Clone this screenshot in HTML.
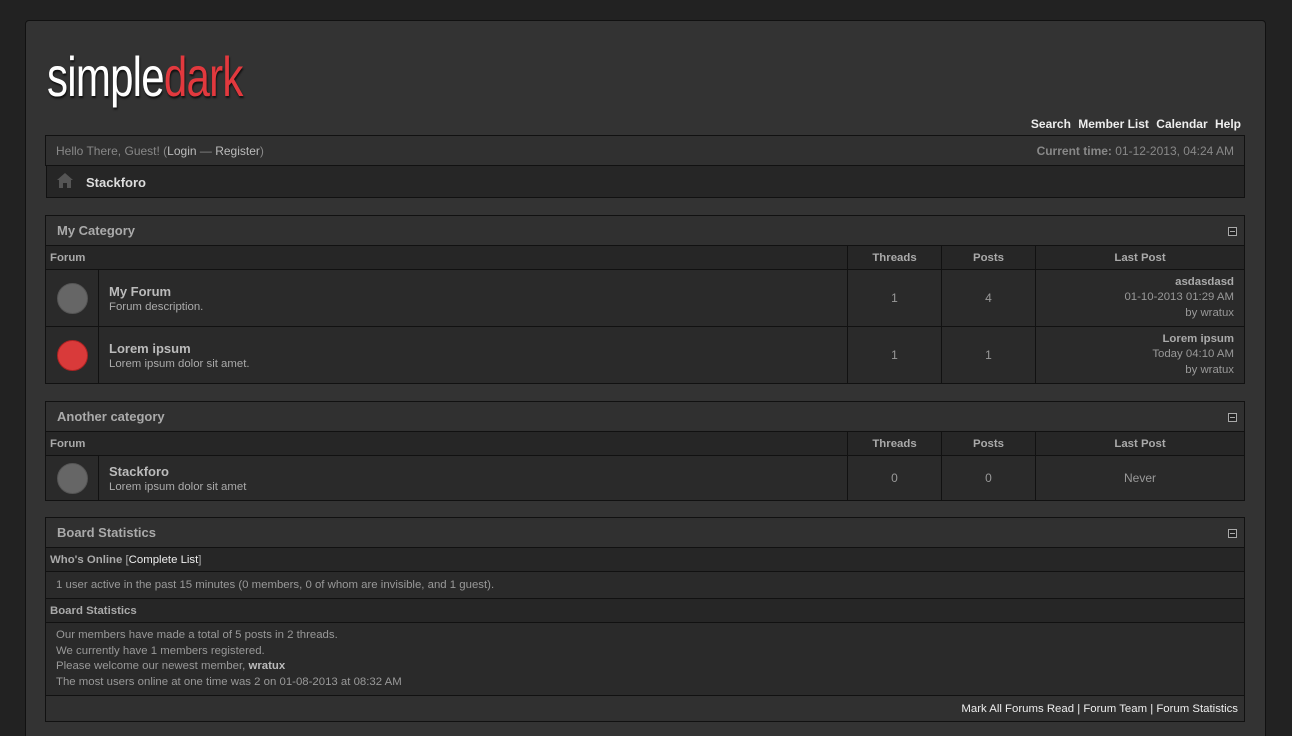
<!DOCTYPE html>
<html><head><meta charset="utf-8"><style>
*{box-sizing:border-box;margin:0;padding:0}
html,body{width:1292px;height:736px;overflow:hidden}
body{background:#222;font-family:"Liberation Sans","DejaVu Sans",sans-serif;font-size:11.4px;color:#aaa;position:relative}
.wrap{position:absolute;left:25px;top:20px;width:1241px;height:730px;background:#333;border:1px solid #111;border-radius:4px}
.a{position:absolute}
.logo{left:47px;top:44px;font-size:56px;color:#fff;letter-spacing:-1px;text-shadow:1px 2px 2px #111;transform:scaleX(0.75);transform-origin:0 0;white-space:nowrap}
.logo span{color:#e2393e}
.links{right:51px;top:117px;font-weight:bold;font-size:12px;color:#eee}
.links b{margin-left:4px}
.bar{left:45px;width:1200px;border:1px solid #111}
table{border-collapse:collapse;width:1200px;position:absolute;left:45px;table-layout:fixed}
td{border:1px solid #111;background:#2a2a2a}
.th td{background:#303030;height:30px;font-size:13px;font-weight:bold;color:#aaa;padding-left:11px;position:relative}
.ch td{background:#262626;height:24px;font-weight:bold;color:#aaa;text-align:center}
.ch td:first-child{text-align:left;padding-left:4px}
.c{text-align:center;font-size:12px;color:#999}
.ic{text-align:center}
.dot{display:inline-block;width:31px;height:31px;border-radius:50%;background:#666;border:1px solid #555;vertical-align:middle}
.red{background:#d93a3a;border-color:#a22}
.fn{padding-left:10px}
.fn b{font-size:13px;color:#bbb;display:block;margin-bottom:2px}
.lp{text-align:right;padding-right:10px;line-height:15.5px;color:#999}
.lp b{color:#aaa}
.col{position:absolute;right:7px;top:11px;width:9px;height:9px;border:1px solid #aaa;background:#222}
.col:after{content:"";position:absolute;left:1px;top:3px;width:5px;height:1px;background:#aaa}
.sub td{background:#262626;height:24px;font-weight:bold;color:#aaa;padding-left:4px}
.txt td{padding-left:10px;color:#999}
</style></head><body>
<div class="wrap"></div>
<div class="a logo">simple<span>dark</span></div>
<div class="a links">Search <b>Member List</b> <b>Calendar</b> <b>Help</b></div>
<div class="a bar" style="top:135px;height:31px;background:#303030;padding:8px 10px;font-size:12px;color:#888">Hello There, Guest! (<span style="color:#bbb">Login</span> — <span style="color:#bbb">Register</span>)<span style="float:right"><b>Current time:</b> 01-12-2013, 04:24 AM</span></div>
<div class="a bar" style="top:166px;height:32px;background:#262626;border-top:none;left:46px;width:1199px">
<svg class="a" style="left:9px;top:6px" width="18" height="17" viewBox="0 0 18 17"><path d="M9 1L1 8h2v8h4v-5h4v5h4V8h2z" fill="#555"/></svg>
<b class="a" style="left:39px;top:9px;font-size:13px;color:#ddd">Stackforo</b></div>

<table style="top:215px">
<colgroup><col style="width:53px"><col style="width:749px"><col style="width:94px"><col style="width:94px"><col></colgroup>
<tr class="th"><td colspan="5">My Category<span class="col"></span></td></tr>
<tr class="ch"><td colspan="2">Forum</td><td>Threads</td><td>Posts</td><td>Last Post</td></tr>
<tr style="height:57px"><td class="ic"><span class="dot"></span></td><td class="fn"><b>My Forum</b>Forum description.</td><td class="c">1</td><td class="c">4</td><td class="lp"><b>asdasdasd</b><br>01-10-2013 01:29 AM<br>by wratux</td></tr>
<tr style="height:57px"><td class="ic"><span class="dot red"></span></td><td class="fn"><b>Lorem ipsum</b>Lorem ipsum dolor sit amet.</td><td class="c">1</td><td class="c">1</td><td class="lp"><b>Lorem ipsum</b><br>Today 04:10 AM<br>by wratux</td></tr>
</table>

<table style="top:401px">
<colgroup><col style="width:53px"><col style="width:749px"><col style="width:94px"><col style="width:94px"><col></colgroup>
<tr class="th"><td colspan="5">Another category<span class="col"></span></td></tr>
<tr class="ch"><td colspan="2">Forum</td><td>Threads</td><td>Posts</td><td>Last Post</td></tr>
<tr style="height:45px"><td class="ic"><span class="dot"></span></td><td class="fn"><b>Stackforo</b>Lorem ipsum dolor sit amet</td><td class="c">0</td><td class="c">0</td><td class="c">Never</td></tr>
</table>

<table style="top:517px">
<tr class="th"><td>Board Statistics<span class="col"></span></td></tr>
<tr class="sub"><td>Who's Online <span style="font-weight:normal">[<span style="color:#eee">Complete List</span>]</span></td></tr>
<tr class="txt"><td style="height:27px">1 user active in the past 15 minutes (0 members, 0 of whom are invisible, and 1 guest).</td></tr>
<tr class="sub"><td>Board Statistics</td></tr>
<tr class="txt"><td style="height:73px;line-height:15.5px">Our members have made a total of 5 posts in 2 threads.<br>We currently have 1 members registered.<br>Please welcome our newest member, <b style="color:#bbb">wratux</b><br>The most users online at one time was 2 on 01-08-2013 at 08:32 AM</td></tr>
<tr><td style="height:26px;background:#303030;text-align:right;padding-right:6px;color:#eee">Mark All Forums Read | Forum Team | Forum Statistics</td></tr>
</table>
</body></html>
